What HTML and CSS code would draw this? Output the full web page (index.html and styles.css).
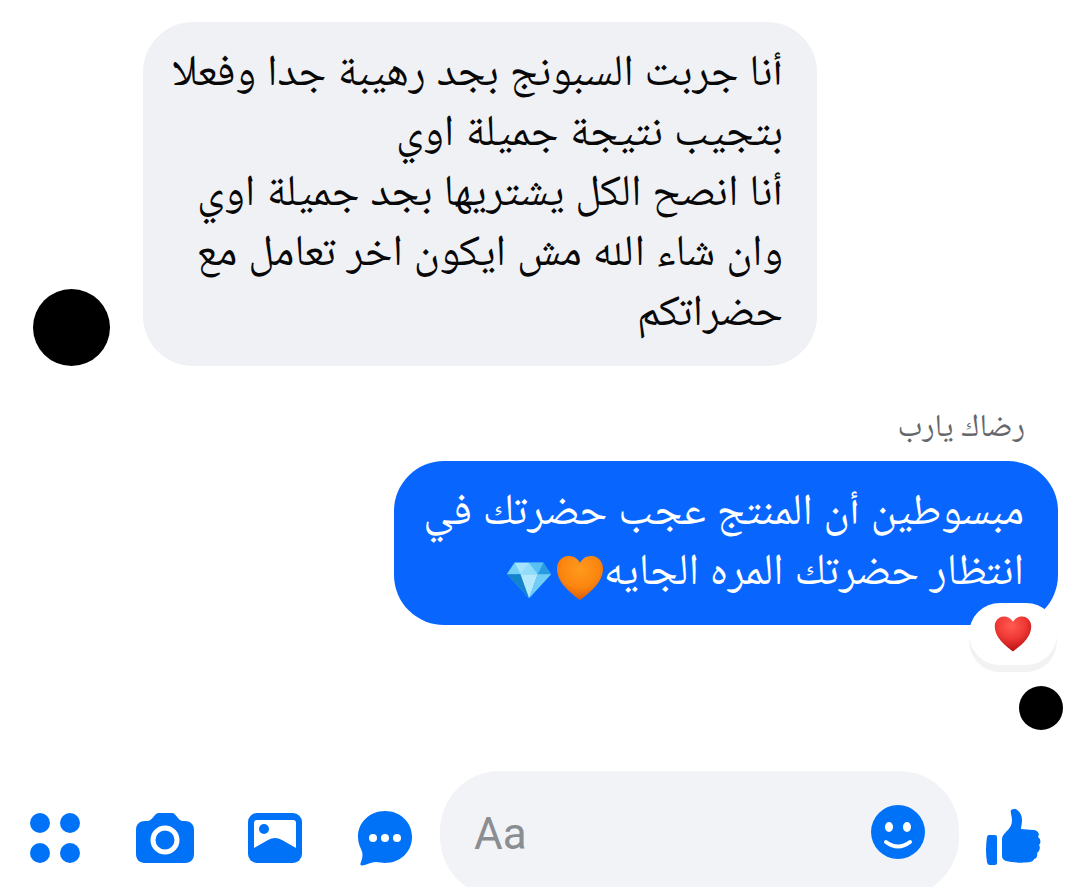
FILE: index.html
```
<!DOCTYPE html>
<html lang="ar">
<head>
    <meta charset="UTF-8">
    <meta name="viewport" content="width=device-width, initial-scale=1.0">
    <title>Chat</title>
    <link rel="stylesheet" href="styles.css">
</head>
<body>
    <main class="chat">
        <div class="row received">
            <div class="avatar"></div>
            <div class="bubble bubble-in" dir="rtl">
                أنا جربت السبونج بجد رهيبة جدا وفعلا<br>
                بتجيب نتيجة جميلة اوي<br>
                أنا انصح الكل يشتريها بجد جميلة اوي<br>
                وان شاء الله مش ايكون اخر تعامل مع<br>
                حضراتكم
            </div>
        </div>

        <div class="sender" dir="rtl">رضاك يارب</div>
        <div class="row sent">
            <div class="bubble bubble-out" dir="rtl">
                مبسوطين أن المنتج عجب حضرتك في<br>
                انتظار حضرتك المره الجايه<svg class="emoji" viewBox="0 0 50 50" role="img" aria-label="orange heart">
                    <defs>
                        <radialGradient id="orange" cx="0.5" cy="0.3" r="0.7">
                            <stop offset="0" stop-color="#ff9a1c"/>
                            <stop offset="0.6" stop-color="#fb8510"/>
                            <stop offset="1" stop-color="#d9590a"/>
                        </radialGradient>
                    </defs>
                    <path fill="url(#orange)" d="M25 9C22 4 18 2 13 2C6 2 1 8 1 15C1 30 15 40 25 48C35 40 49 30 49 15C49 8 44 2 37 2C32 2 28 4 25 9Z"/>
                </svg><svg class="emoji" viewBox="0 0 50 50" role="img" aria-label="gem">
                    <path fill="#3dacec" d="M10 9H40L48 21L25 46L2 21Z"/>
                    <path fill="#8fdcfb" d="M10 9H40L34 21H16Z"/>
                    <path fill="#a5e4fc" d="M10 9L16 21L25 9Z"/>
                    <path fill="#58c1f4" d="M40 9L34 21L25 9Z"/>
                    <path fill="#74d0f8" d="M10 9L2 21H16Z"/>
                    <path fill="#2a9be2" d="M40 9L48 21H34Z"/>
                    <path fill="#b4e9fc" d="M16 21H34L25 46Z"/>
                    <path fill="#1583cc" d="M2 21H16L25 46Z"/>
                    <path fill="#6fcdf6" d="M34 21H48L25 46Z"/>
                </svg>
            </div>
            <div class="reaction">
                <svg viewBox="0 0 50 50" role="img" aria-label="red heart">
                    <defs>
                        <radialGradient id="red" cx="0.45" cy="0.25" r="0.75">
                            <stop offset="0" stop-color="#ff5a50"/>
                            <stop offset="0.5" stop-color="#f13a37"/>
                            <stop offset="1" stop-color="#b80f12"/>
                        </radialGradient>
                    </defs>
                    <path fill="url(#red)" d="M25 9C22 4 18 2 13 2C6 2 1 8 1 15C1 30 15 40 25 48C35 40 49 30 49 15C49 8 44 2 37 2C32 2 28 4 25 9Z"/>
                </svg>
            </div>
        </div>
        <div class="seen"></div>
    </main>

    <form class="composer">
        <button type="button" class="icon-btn" aria-label="More">
            <svg viewBox="0 0 60 60">
                <circle cx="15" cy="15" r="10"/>
                <circle cx="45" cy="15" r="10"/>
                <circle cx="15" cy="45" r="10"/>
                <circle cx="45" cy="45" r="10"/>
            </svg>
        </button>
        <button type="button" class="icon-btn" aria-label="Camera">
            <svg viewBox="0 0 60 60">
                <path d="M24 5H37C41 5 43 13 48 13H50C56 13 59 17 59 22V46C59 52 55 55 50 55H10C4 55 1 51 1 46V22C1 16 5 13 10 13H12C18 13 19 5 24 5Z"/>
                <circle class="hole-stroke" cx="30" cy="32" r="12"/>
            </svg>
        </button>
        <button type="button" class="icon-btn" aria-label="Gallery">
            <svg viewBox="0 0 60 60">
                <rect x="3" y="5" width="54" height="50" rx="9"/>
                <path class="hole" d="M12 12H48Q51 12 51 15V40L37 32Q30 28 23 32L9 40V15Q9 12 12 12Z"/>
                <circle cx="19" cy="21" r="5"/>
            </svg>
        </button>
        <button type="button" class="icon-btn" aria-label="Quick reply">
            <svg viewBox="0 0 60 60">
                <path d="M30 3C45 3 57 14 57 29C57 44 45 55 30 55C27 55 24 54 21 54C16 54 12 57 7 57.500C5 57.500 5 56 6 54C8 49 8 45 6 41C4 37 3 33 3 29C3 14 15 3 30 3Z"/>
                <circle class="hole" cx="18" cy="30" r="4"/>
                <circle class="hole" cx="30" cy="30" r="4"/>
                <circle class="hole" cx="42" cy="30" r="4"/>
            </svg>
        </button>
        <div class="field">
            <input type="text" placeholder="Aa" aria-label="Message">
            <button type="button" class="smiley" aria-label="Emoji">
                <svg viewBox="0 0 54 54">
                    <circle cx="27" cy="27" r="27"/>
                    <ellipse class="hole" cx="18" cy="22" rx="4" ry="5"/>
                    <ellipse class="hole" cx="36" cy="22" rx="4" ry="5"/>
                    <path class="smile" d="M15 37Q27 46 39 37"/>
                </svg>
            </button>
        </div>
        <button type="button" class="icon-btn like" aria-label="Like">
            <svg viewBox="0 0 60 60">
                <path d="M5 27H11Q13 27 13 29V55Q13 57 11 57H6Q3.500 57 3 54Q1 42 3 29Q3.500 27 5 27Z"/>
                <path d="M27 2C32 -1 38 4 38 12C38 16 37 18 37 21L49 22C54 22 56 26 54 29C57 31 57 35 55 37C57 40 55 44 53 45C54 48 52 51 50 51C49 54 46 54 42 54.500C34 55 27 54 22 53C19 52 18 50 18 48V31C18 28 20 26 22 24C26 20 28 17 28 12C28 8 26 4 27 2Z"/>
            </svg>
        </button>
    </form>
</body>
</html>
```
FILE: styles.css
```
* {
    box-sizing: border-box;
    margin: 0;
    padding: 0;
}

body {
    background-color: #fff;
    font-family: Roboto, "Noto Naskh Arabic UI", "Noto Naskh Arabic", "Noto Sans Arabic", "DejaVu Sans", sans-serif;
    overflow: hidden;
}

.chat {
    padding: 22px 17px 0 33px;
}

.row {
    display: flex;
    align-items: flex-end;
}

.received {
    gap: 33px;
}

.avatar {
    width: 77px;
    height: 77px;
    border-radius: 50%;
    background-color: #000;
}

.bubble {
    padding: 24px 34px 20px;
    border-radius: 50px;
    font-size: 44px;
    line-height: 60px;
    white-space: nowrap;
}

.bubble-in {
    width: 674px;
    background-color: #f0f1f5;
    color: #080809;
}

.sender {
    margin: 42px 38px 11px 0;
    font-size: 32px;
    line-height: 42px;
    color: #65676b;
}

.sent {
    position: relative;
    justify-content: flex-end;
    padding-right: 5px;
}

.bubble-out {
    width: 664px;
    background-color: #0866ff;
    color: #fff;
}

.emoji {
    width: 48px;
    height: 48px;
    margin-left: 3px;
    vertical-align: middle;
}

.reaction {
    position: absolute;
    right: 6px;
    bottom: -40px;
    width: 88px;
    height: 62px;
    border-radius: 31px;
    background-color: #fff;
    box-shadow: 0 7px 0 #f2f2f2;
    display: flex;
    justify-content: center;
    align-items: center;
}

.reaction svg {
    width: 38px;
    height: 38px;
}

.seen {
    width: 44px;
    height: 44px;
    margin-top: 61px;
    margin-left: auto;
    border-radius: 50%;
    background-color: #000;
}

.composer {
    display: flex;
    align-items: flex-start;
    margin-top: 41px;
    padding-right: 11px;
}

button {
    border: none;
    background: none;
    cursor: pointer;
}

svg {
    fill: #0072f8;
}

.icon-btn {
    flex: none;
    width: 110px;
    padding-top: 37px;
}

.icon-btn svg {
    width: 60px;
    height: 60px;
}

.field {
    flex: 1;
    min-width: 0;
    height: 126px;
    padding: 0 34px 4px;
    border-radius: 60px;
    background-color: #f2f3f7;
    display: flex;
    align-items: center;
}

.field input {
    flex: 1;
    min-width: 0;
    padding-top: 4px;
    border: none;
    outline: none;
    background: none;
    font-family: Roboto, sans-serif;
    font-size: 44px;
}

.field input::placeholder {
    color: #8a8d91;
}

.smiley svg {
    display: block;
    width: 54px;
    height: 54px;
}

svg .hole {
    fill: #fff;
}

.hole-stroke {
    stroke: #fff;
    stroke-width: 5;
}

.smile {
    fill: none;
    stroke: #fff;
    stroke-width: 4;
    stroke-linecap: round;
}
```
